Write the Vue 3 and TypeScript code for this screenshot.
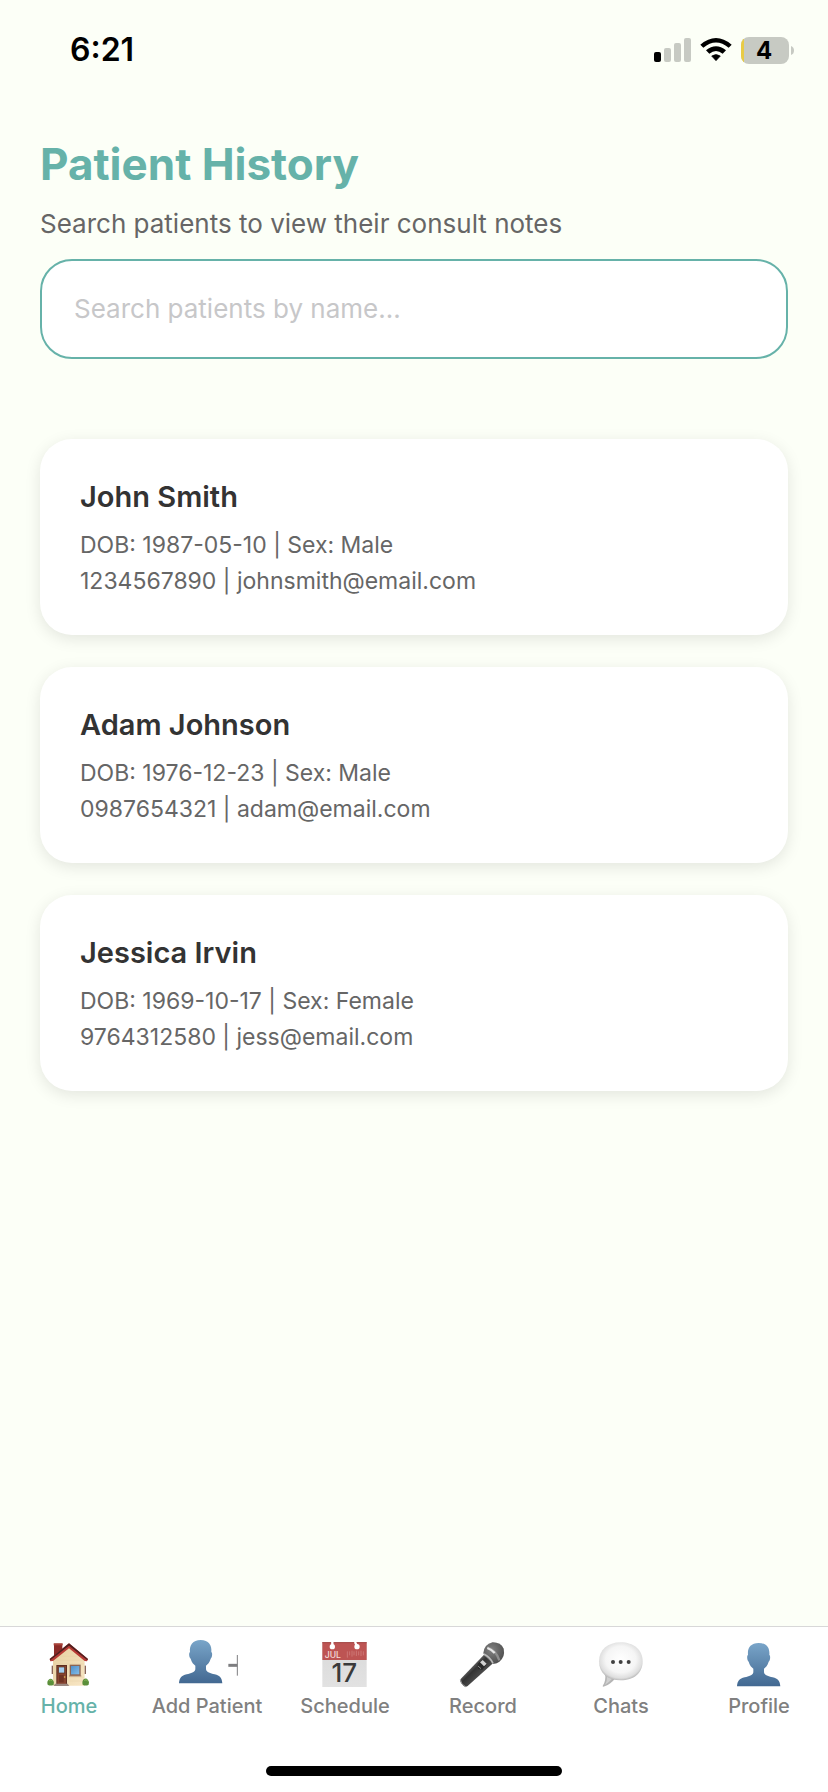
<script setup lang="ts">
import { computed, ref } from 'vue'

interface Patient {
  name: string
  dob: string
  sex: string
  phone: string
  email: string
}

interface Tab {
  id: string
  label: string
}

const patients: Patient[] = [
  { name: 'John Smith', dob: '1987-05-10', sex: 'Male', phone: '1234567890', email: 'johnsmith@email.com' },
  { name: 'Adam Johnson', dob: '1976-12-23', sex: 'Male', phone: '0987654321', email: 'adam@email.com' },
  { name: 'Jessica Irvin', dob: '1969-10-17', sex: 'Female', phone: '9764312580', email: 'jess@email.com' },
]

const tabs: Tab[] = [
  { id: 'home', label: 'Home' },
  { id: 'add', label: 'Add Patient' },
  { id: 'schedule', label: 'Schedule' },
  { id: 'record', label: 'Record' },
  { id: 'chats', label: 'Chats' },
  { id: 'profile', label: 'Profile' },
]

const query = ref('')
const activeTab = ref('home')

const visiblePatients = computed(() => {
  const q = query.value.trim().toLowerCase()
  return patients.filter((p) => p.name.toLowerCase().includes(q))
})
</script>

<template>
  <div class="screen">
    <header class="status">
      <time class="clock">6:21</time>
      <div class="indicators">
        <svg class="signal" viewBox="0 0 37 24" aria-hidden="true">
          <rect x="0" y="14" width="7" height="10" rx="2" fill="#000" />
          <rect x="10" y="10" width="7" height="14" rx="2" fill="#c7cac3" />
          <rect x="20" y="5" width="7" height="19" rx="2" fill="#c7cac3" />
          <rect x="30" y="0" width="7" height="24" rx="2" fill="#c7cac3" />
        </svg>
        <svg class="wifi" viewBox="0 0 96 72" aria-hidden="true">
          <path d="M1 20 Q48 -20 95 20 L86 29 Q48 -2 10 29 Z" />
          <path d="M18 37 Q48 13 78 37 L68 47 Q48 31 28 47 Z" />
          <path d="M35 54 Q48 45 61 54 L48 68 Z" stroke="#000" stroke-width="2" stroke-linejoin="round" />
        </svg>
        <svg class="battery" viewBox="0 0 53 27" aria-hidden="true">
          <defs>
            <clipPath id="battery-shell"><rect width="48" height="27" rx="8" /></clipPath>
          </defs>
          <g clip-path="url(#battery-shell)">
            <rect width="48" height="27" fill="#c7cac3" />
            <rect width="3" height="27" fill="#e8cb45" />
          </g>
          <path d="M50 9 Q53 10 53 13.500 Q53 17 50 18 Z" fill="#c7cac3" />
          <text x="23" y="22" text-anchor="middle" class="charge">4</text>
        </svg>
      </div>
    </header>

    <main class="content">
      <h1 class="title">Patient History</h1>
      <label class="subtitle" for="patient-search">Search patients to view their consult notes</label>
      <input
        id="patient-search"
        v-model="query"
        class="search"
        type="text"
        placeholder="Search patients by name..."
      />
      <ul class="patients">
        <li v-for="p in visiblePatients" :key="p.phone" class="card">
          <h2 class="name">{{ p.name }}</h2>
          <p class="detail">DOB: {{ p.dob }} | Sex: {{ p.sex }}</p>
          <p class="detail">{{ p.phone }} | {{ p.email }}</p>
        </li>
      </ul>
    </main>

    <footer class="dock">
      <nav class="tabs">
        <button
          v-for="tab in tabs"
          :key="tab.id"
          type="button"
          class="tab"
          :class="{ active: tab.id === activeTab }"
          @click="activeTab = tab.id"
        >
          <svg v-if="tab.id === 'home'" class="icon" viewBox="75 90 144 144" aria-hidden="true">
            <defs>
              <linearGradient id="wall" x1="0" y1="0" x2="1" y2="1">
                <stop offset="0" stop-color="#e6cfa0" />
                <stop offset="1" stop-color="#f8e6c4" />
              </linearGradient>
              <linearGradient id="pane" x1="0" y1="0" x2="1" y2="1">
                <stop offset="0" stop-color="#4f8fc9" />
                <stop offset="1" stop-color="#83bdea" />
              </linearGradient>
            </defs>
            <rect x="102" y="101" width="25" height="38" fill="#8c2b28" />
            <rect x="101" y="100" width="27" height="6" fill="#a9423a" />
            <path d="M99 148 L147 108 L194 148 V227 H99 Z" fill="url(#wall)" />
            <path d="M120 139 H172 M108 151 H187 M101 162 H192 M147 202 H192 M147 213 H192" stroke="#e3cb9d" stroke-width="1" />
            <path d="M147 100 L204 147 L201 154 L194 153 L147 115 L99 153 L91 154 L89 147 Z" fill="#b83a35" />
            <path d="M147 100 L204 147 L202 151 L147 107 L91 151 L89 147 Z" fill="#52201f" />
            <rect x="95" y="167" width="4" height="25" fill="#8a6658" />
            <rect x="194" y="167" width="4" height="25" fill="#8a6658" />
            <rect x="109" y="165" width="32" height="57" fill="#5e2e20" />
            <rect x="112" y="168" width="26" height="54" fill="#874431" />
            <rect x="116" y="171" width="18" height="18" fill="#a5cef0" stroke="#55301f" stroke-width="2" />
            <rect x="117" y="195" width="14" height="22" fill="#6f3425" />
            <circle cx="134" cy="201" r="2.500" fill="#e8c05a" />
            <rect x="149" y="164" width="33" height="34" fill="#8b6553" />
            <rect x="153" y="168" width="25" height="25" fill="url(#pane)" />
            <path d="M147 198 H184" stroke="#a98268" stroke-width="3" />
            <path d="M105 221 H143 L148 228 H101 Z" fill="#9b8880" />
            <path d="M83 224 Q80 214 86 209 Q92 203 98 209 Q104 215 101 224 Q92 229 83 224 Z" fill="#5b8f3a" />
            <path d="M188 224 Q185 213 192 207 Q199 203 204 210 Q210 217 206 224 Q197 229 188 224 Z" fill="#5b8f3a" />
            <path d="M87 213 Q92 207 97 212 M193 212 Q198 206 203 213" fill="none" stroke="#86b757" stroke-width="3" />
          </svg>

          <svg v-else-if="tab.id === 'add'" class="icon wide" viewBox="105 90 192 144" aria-hidden="true">
            <defs>
              <linearGradient id="figure-add" x1="0" y1="0" x2="0" y2="1">
                <stop offset="0" stop-color="#79a5c9" />
                <stop offset="1" stop-color="#426891" />
              </linearGradient>
            </defs>
            <path
              d="M182 90 C206 90 216 105 214 126 C218 128 217 142 212 146 C209 157 203 163 198 167 V178 C200 188 211 190 224 193 C240 197 246 204 247 220 H117 C118 204 124 197 140 193 C153 190 164 188 166 178 V167 C161 163 155 157 152 146 C147 142 146 128 150 126 C148 105 158 90 182 90 Z"
              fill="url(#figure-add)"
            />
            <path d="M265 166 H292" stroke="#7d7d80" stroke-width="9" />
            <path d="M292 135 V197" stroke="#7d7d80" stroke-width="3" />
          </svg>

          <svg v-else-if="tab.id === 'schedule'" class="icon" viewBox="123 90 144 144" aria-hidden="true">
            <defs>
              <linearGradient id="paper" x1="0" y1="0" x2="0" y2="1">
                <stop offset="0" stop-color="#d9d9d9" />
                <stop offset="1" stop-color="#e2e2e2" />
              </linearGradient>
            </defs>
            <rect x="127" y="97" width="133" height="134" fill="url(#paper)" />
            <rect x="127" y="97" width="133" height="53" fill="#bd5453" />
            <path d="M127 98 H260" stroke="#a34645" stroke-width="3" />
            <path d="M202 124 V143 M209 124 V136 M216 122 V140 M222 124 V136 M229 122 V138 M236 124 V136 M243 122 V138 M250 124 V136" stroke="#d58886" stroke-width="2" />
            <path d="M157 96 V108 M225 96 L231 109" stroke="#fff" stroke-width="7" />
            <circle cx="157" cy="110" r="8" fill="#fff" />
            <circle cx="231" cy="110" r="8" fill="#fff" />
            <text x="134" y="143" class="month">JUL</text>
            <text x="193" y="217" text-anchor="middle" class="day">17</text>
          </svg>

          <svg v-else-if="tab.id === 'record'" class="icon" viewBox="117 90 144 144" aria-hidden="true">
            <defs>
              <linearGradient id="handle" x1="0" y1="0" x2="1" y2="1">
                <stop offset="0.300" stop-color="#777" />
                <stop offset="0.450" stop-color="#333" />
                <stop offset="0.700" stop-color="#555" />
              </linearGradient>
              <radialGradient id="grille" cx="0.400" cy="0.350" r="0.700">
                <stop offset="0" stop-color="#a2a2a2" />
                <stop offset="1" stop-color="#535353" />
              </radialGradient>
              <pattern id="mesh" width="5" height="5" patternUnits="userSpaceOnUse">
                <path d="M0 0 L5 5 M5 0 L0 5" stroke="#3c3c3c" stroke-width="0.800" />
              </pattern>
            </defs>
            <path d="M192 134 L219 160 L143 228 Q137 233 131 228 L123 218 Q119 212 122 207 Z" fill="url(#handle)" />
            <path d="M121 209 Q122 223 138 231" fill="none" stroke="#999" stroke-width="3" />
            <path d="M190 130 Q192 103 218 97 Q242 97 251 116 Q256 140 238 155 Q229 162 219 161 Z" fill="url(#grille)" />
            <path d="M190 130 Q192 103 218 97 Q242 97 251 116 Q256 140 238 155 Q229 162 219 161 Z" fill="url(#mesh)" />
            <path d="M202 112 Q228 120 238 151" fill="none" stroke="#8f8f8f" stroke-width="7" />
            <path d="M202 114 Q216 119 224 129" fill="none" stroke="#e6e6e6" stroke-width="7" />
            <path d="M192 132 Q209 140 219 160" fill="none" stroke="#b9b9b9" stroke-width="5" />
            <path d="M173 161 L187 149 L201 161 L187 179 L175 177 Z" fill="#292929" />
            <path d="M180 157 L188 150 L200 161 L192 169 Z" fill="#d2d2d2" />
            <path d="M174 168 L183 176" stroke="#8a8a8a" stroke-width="3" />
          </svg>

          <svg v-else-if="tab.id === 'chats'" class="icon" viewBox="111 90 144 144" aria-hidden="true">
            <defs>
              <radialGradient id="bubble" cx="0.500" cy="0.450" r="0.580">
                <stop offset="0" stop-color="#fff" />
                <stop offset="0.600" stop-color="#f5f5f5" />
                <stop offset="0.850" stop-color="#dedede" />
                <stop offset="1" stop-color="#a8a8a8" />
              </radialGradient>
            </defs>
            <path d="M135 190 Q139 213 128 228 Q128 232 134 229 Q153 222 164 207 Z" fill="#b5b5b5" />
            <path d="M140 195 Q143 213 134 225 Q148 217 158 205 Z" fill="#d0d0d0" />
            <path d="M182 97 C221 97 248 120 248 154 C248 190 221 211 182 211 C143 211 117 190 117 154 C117 120 143 97 182 97 Z" fill="url(#bubble)" />
            <circle cx="159" cy="156" r="6" fill="#404040" />
            <circle cx="182" cy="156" r="6" fill="#404040" />
            <circle cx="206" cy="156" r="6" fill="#404040" />
          </svg>

          <svg v-else class="icon" viewBox="111 81 144 144" aria-hidden="true">
            <defs>
              <linearGradient id="figure-profile" x1="0" y1="0" x2="0" y2="1">
                <stop offset="0" stop-color="#79a5c9" />
                <stop offset="1" stop-color="#426891" />
              </linearGradient>
            </defs>
            <path
              d="M182 90 C206 90 216 105 214 126 C218 128 217 142 212 146 C209 157 203 163 198 167 V178 C200 188 211 190 224 193 C240 197 246 204 247 220 H117 C118 204 124 197 140 193 C153 190 164 188 166 178 V167 C161 163 155 157 152 146 C147 142 146 128 150 126 C148 105 158 90 182 90 Z"
              fill="url(#figure-profile)"
            />
          </svg>

          <span class="label">{{ tab.label }}</span>
        </button>
      </nav>
      <div class="home-indicator"></div>
    </footer>
  </div>
</template>

<style>
body {
  margin: 0;
  background: #fcfff7;
}
</style>

<style scoped>
.screen {
  display: flex;
  flex-direction: column;
  min-height: 100vh;
  background: #fcfff7;
  font-family: Inter, "Liberation Sans", sans-serif;
  color: #333;
}

.status {
  display: flex;
  align-items: center;
  justify-content: space-between;
  height: 100px;
  padding: 0 34px 0 70px;
}

.clock {
  font-size: 32px;
  font-weight: 600;
  line-height: 40px;
  color: #000;
}

.indicators {
  display: flex;
  align-items: center;
  gap: 9px;
}

.signal {
  width: 37px;
  height: 24px;
}

.wifi {
  width: 32px;
  height: 24px;
}

.battery {
  width: 53px;
  height: 27px;
}

.charge {
  font-size: 24px;
  font-weight: 700;
}

.content {
  display: flex;
  flex: 1;
  flex-direction: column;
  padding: 36px 40px 40px;
}

.title {
  margin: 0;
  font-size: 44px;
  font-weight: 700;
  line-height: 56px;
  color: #66b2a9;
}

.subtitle {
  margin-top: 12px;
  font-size: 26px;
  line-height: 40px;
  color: #666;
}

.search {
  box-sizing: border-box;
  width: 100%;
  height: 100px;
  margin-top: 15px;
  padding: 0 32px 2px;
  border: 2px solid #66b2a9;
  border-radius: 32px;
  outline: none;
  background: #fff;
  font-family: inherit;
  font-size: 26px;
  color: #333;
}

.search::placeholder {
  color: #c7c7c9;
  opacity: 1;
}

.patients {
  display: flex;
  flex-direction: column;
  gap: 32px;
  margin: 80px 0 0;
  padding: 0;
  list-style: none;
}

.card {
  padding: 40px 40px 36px;
  border-radius: 32px;
  background: #fff;
  box-shadow: 0 4px 16px rgba(0, 0, 0, 0.1);
}

.name {
  margin: 0 0 12px;
  font-size: 29px;
  font-weight: 600;
  line-height: 36px;
}

.detail {
  margin: 0;
  font-size: 23px;
  line-height: 36px;
  color: #666;
}

.dock {
  display: flex;
  flex-direction: column;
  align-items: center;
  padding-bottom: 16px;
  border-top: 1px solid #d8d8d8;
  background: #fff;
}

.tabs {
  display: grid;
  grid-template-columns: repeat(6, 1fr);
  width: 100%;
}

.tab {
  display: flex;
  flex-direction: column;
  align-items: center;
  gap: 6px;
  padding: 13px 0 0;
  border: 0;
  background: none;
  font-family: inherit;
  font-size: 20px;
  font-weight: 500;
  line-height: 24px;
  color: #808080;
  white-space: nowrap;
  cursor: pointer;
}

.tab.active {
  color: #66b2a9;
}

.icon {
  width: 48px;
  height: 48px;
}

.icon.wide {
  width: 64px;
}

.month {
  font-size: 26px;
  fill: #f3dcdb;
}

.day {
  font-size: 78px;
  font-weight: 500;
  fill: #3a3a3a;
}

.home-indicator {
  width: 296px;
  height: 10px;
  margin-top: 48px;
  border-radius: 5px;
  background: #000;
}
</style>
